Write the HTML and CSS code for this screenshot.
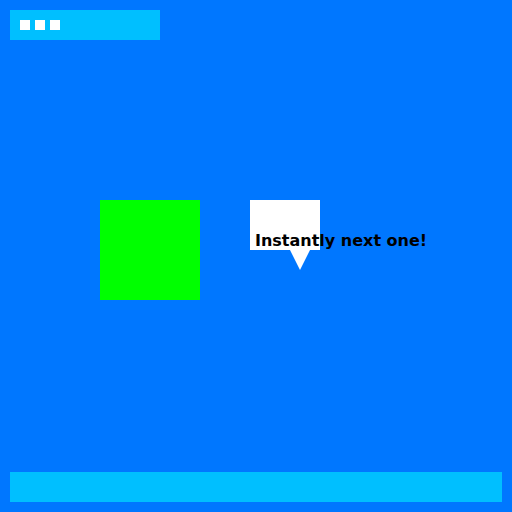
FILE: index.html
```html
<!DOCTYPE html>
<html>
<head>
<meta charset="utf-8">
<link rel="stylesheet" href="styles.css">
</head>
<body>
<div class="page">
  <div class="topbar">
    <span class="dot"></span>
    <span class="dot"></span>
    <span class="dot"></span>
  </div>
  <div class="stage">
    <div class="square"></div>
    <div class="bubble">
      <span class="bubble-text">Instantly next one!</span>
    </div>
  </div>
  <div class="footer"></div>
</div>
</body>
</html>
```
FILE: styles.css
```css
html, body {
  margin: 0;
  padding: 0;
  background: #0077ff;
}
.page {
  width: 512px;
  height: 512px;
  display: flex;
  flex-direction: column;
  padding: 10px;
  box-sizing: border-box;
  font-family: "DejaVu Sans", sans-serif;
}
.topbar {
  width: 150px;
  height: 30px;
  box-sizing: border-box;
  padding: 10px;
  background: #00bfff;
  display: flex;
  gap: 5px;
}
.dot {
  width: 10px;
  height: 10px;
  background: #ffffff;
}
.stage {
  margin-top: 160px;
  padding-left: 90px;
  display: flex;
  gap: 50px;
}
.square {
  width: 100px;
  height: 100px;
  background: #00ff00;
}
.bubble {
  position: relative;
  width: 70px;
  height: 50px;
  box-sizing: border-box;
  background: #ffffff;
  padding: 33px 0 0 5px;
}
.bubble::after {
  content: "";
  position: absolute;
  left: 40px;
  top: 50px;
  width: 0;
  height: 0;
  border-left: 10px solid transparent;
  border-right: 10px solid transparent;
  border-top: 20px solid #ffffff;
}
.bubble-text {
  display: block;
  white-space: nowrap;
  font-size: 16px;
  font-weight: bold;
  line-height: 16px;
  color: #000000;
}
.footer {
  margin-top: auto;
  height: 30px;
  background: #00bfff;
}
```
